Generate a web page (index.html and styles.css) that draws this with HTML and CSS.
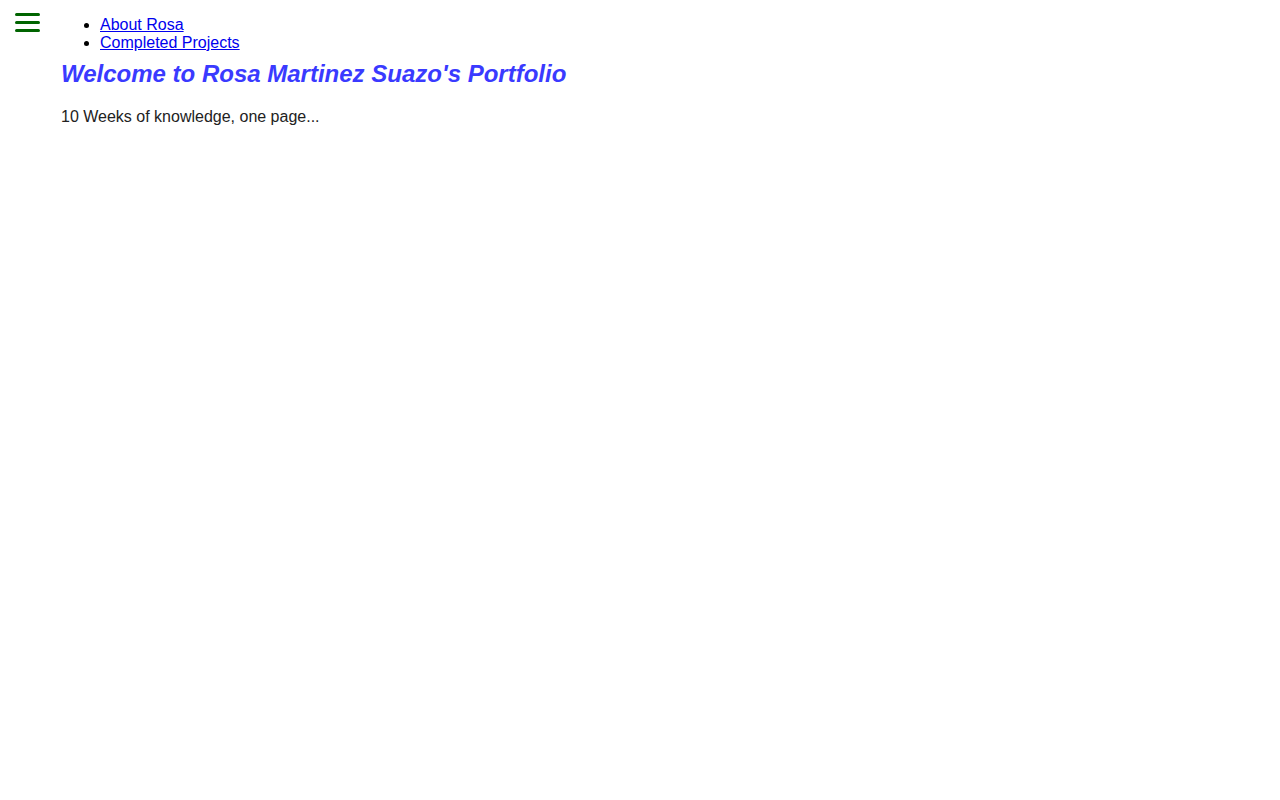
FILE: index.html
```html
<!DOCTYPE html>
<html lang="en">
<head>
<meta charset="utf-8">
<title>Rosa Martinez Suazo's Portfolio</title>
<link rel="stylesheet" href="styles.css">
</head>
<body>
<div class="page">
  <aside class="side">
    <button class="burger" aria-label="Menu">
      <span class="bar"></span><span class="bar"></span><span class="bar"></span>
    </button>
  </aside>
  <main class="content">
    <ul class="menu">
      <li><a href="#about">About Rosa</a></li>
      <li><a href="#projects">Completed Projects</a></li>
    </ul>
    <h1 class="title">Welcome to Rosa Martinez Suazo's Portfolio</h1>
    <p class="intro">10 Weeks of knowledge, one page...</p>
    <div class="filler"></div>
  </main>
</div>
</body>
</html>
```

FILE: styles.css
```css
html, body {
  margin: 0;
  padding: 0;
  background: #ffffff;
}
body {
  font-family: "Liberation Sans", Arial, sans-serif;
  font-size: 16px;
  color: #222222;
}
.page {
  display: flex;
  align-items: flex-start;
}
.side {
  width: 60px;
  flex: 0 0 60px;
  padding-top: 13px;
  padding-left: 15px;
  box-sizing: border-box;
}
.burger {
  display: flex;
  flex-direction: column;
  gap: 5px;
  padding: 0;
  margin: 0;
  border: 0;
  background: transparent;
  cursor: pointer;
}
.bar {
  display: block;
  width: 25px;
  height: 3px;
  border-radius: 2px;
  background: #006400;
}
.content {
  flex: 1;
  padding-top: 16px;
}
.menu {
  margin: 0;
  padding-left: 40px;
  line-height: 18px;
  color: #000;
}
.menu a {
  color: #0000ee;
}
.title {
  margin: 8px 0 0 1px;
  font-size: 24px;
  font-style: italic;
  font-weight: bold;
  color: #3a3aff;
  line-height: 28px;
}
.intro {
  margin: 20px 0 0 1px;
  line-height: 18px;
  color: #222222;
}
.filler {
  height: 2860px;
}
```
